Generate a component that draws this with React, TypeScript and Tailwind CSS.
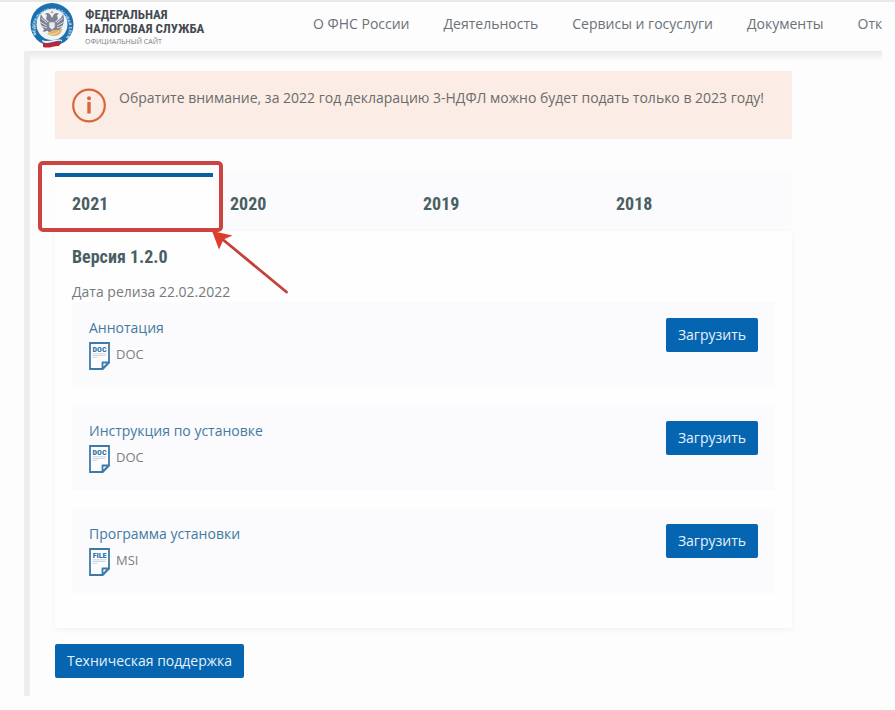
import { useState } from 'react';

const NAV_ITEMS = ['О ФНС России', 'Деятельность', 'Сервисы и госуслуги', 'Документы', 'Отк'];

const YEARS = ['2021', '2020', '2019', '2018'];

const FILES = [
  { title: 'Аннотация', badge: 'DOC', type: 'DOC' },
  { title: 'Инструкция по установке', badge: 'DOC', type: 'DOC' },
  { title: 'Программа установки', badge: 'FILE', type: 'MSI' },
];

function Emblem() {
  return (
    <svg className="h-[46px] w-11 shrink-0 overflow-visible" viewBox="0 0 44 46" aria-hidden="true">
      <defs>
        <path id="ring" d="M8 35.500A17 17 0 1 1 36 35.500" />
      </defs>
      <circle cx="22" cy="22.500" r="21.500" fill="#1d6fae" />
      <circle cx="22" cy="22.500" r="15.500" fill="#f1f4f7" />
      <text fontSize="4" fontWeight="700" fill="#dcebf5" fontFamily="'Liberation Sans', sans-serif">
        <textPath href="#ring" startOffset="3">
          ФЕДЕРАЛЬНАЯ НАЛОГОВАЯ СЛУЖБА
        </textPath>
      </text>
      {/* double-headed eagle */}
      <g fill="#7d8194">
        <path d="M21 14c-1-3-4-4-6-2l2 1-1 4 3 3h6l3-3-1-4 2-1c-2-2-5-1-6 2l-1 2z" />
        <path d="M17 19c-2-1-5-4-6-7-2 5-1 12 3 15l-1 3 4-1 2-4z" />
        <path d="M27 19c2-1 5-4 6-7 2 5 1 12-3 15l1 3-4-1-2-4z" />
        <path d="M17 20h10l1 7-6 7-6-7z" />
      </g>
      <path d="M11 16l6 5M10 20l7 4M11 24l6 2M33 16l-6 5M34 20l-7 4M33 24l-6 2" stroke="#dfe2e8" strokeWidth=".9" />
      <path d="M19 20h6v5l-3 3-3-3z" fill="#e8eaf0" stroke="#8d93a8" strokeWidth=".7" />
      <path d="M20.500 10.500l1.500-2 1.500 2-1.500 1z" fill="#c9a45c" />
      <path d="M17 32c2-1 4-4 7-4 4 0 7 0 8-2 0 5-3 8-8 8-4 0-5-1-7-2z" fill="#dfb56c" />
      <path d="M19 32c3 1 7 0 10-3" stroke="#f3dfb8" strokeWidth=".9" fill="none" />
      {/* tricolour ribbon */}
      <path d="M12 38c6 3 14-2 20 0l-1 3c-5-1-12 3-18 0z" fill="#f7f7f9" />
      <path d="M12.500 40c6 3 13-2 19-1l-.5 2c-6-1-12 3-18 1z" fill="#3a66a4" />
      <path d="M13 41c6 2 12-2 18-1l-2 4c-5-.5-10 3-16 1z" fill="#bf2536" />
    </svg>
  );
}

function FileIcon({ label }: { label: string }) {
  return (
    <svg className="h-7 w-[21px] shrink-0" viewBox="0 0 21 28" fill="none" aria-hidden="true">
      <path d="M1 1h19v19.500L13.500 27H1z" fill="#fdfdff" stroke="#3c7aa8" strokeWidth="1.800" />
      <path d="M13.500 27v-6.500H20z" stroke="#3c7aa8" strokeWidth="1.800" strokeLinejoin="round" />
      <text
        x="10.500"
        y="9.800"
        textAnchor="middle"
        fontSize="8"
        fontWeight="800"
        fill="#2f74a8"
        fontFamily="'Roboto Condensed', Roboto, sans-serif"
      >
        {label}
      </text>
      <path d="M3.500 11.800h14M3.500 13.500h13M3.500 15.300h5" stroke="#b9c6d0" strokeWidth=".7" />
    </svg>
  );
}

function Header() {
  return (
    <header className="flex h-[49px] items-start pl-[6px]">
      <a href="#" className="flex w-[283px] shrink-0 items-start gap-[11px]">
        <Emblem />
        <span className="flex flex-col pt-[6px] text-[#454a50]">
          <span className="font-['Roboto_Condensed','Liberation_Sans_Narrow',Roboto,sans-serif] text-[13px] leading-[14px] font-bold whitespace-nowrap">
            ФЕДЕРАЛЬНАЯ
            <br />
            НАЛОГОВАЯ СЛУЖБА
          </span>
          <span className="text-[7px] leading-3 whitespace-nowrap text-[#777b80]">ОФИЦИАЛЬНЫЙ САЙТ</span>
        </span>
      </a>
      <nav className="flex gap-[34px] pt-3 text-[14px] leading-5 whitespace-nowrap text-[#6b7177]">
        {NAV_ITEMS.map((item) => (
          <a key={item} href="#">
            {item}
          </a>
        ))}
      </nav>
    </header>
  );
}

function Notice() {
  return (
    <div className="flex h-[68px] items-start gap-3 bg-[#fbede5] px-[17px] pt-[17px]" role="note">
      <svg className="h-[35px] w-[35px] shrink-0" viewBox="0 0 35 35" fill="none" aria-hidden="true">
        <circle cx="17" cy="17.500" r="15.800" stroke="#d9663a" strokeWidth="2.200" />
        <path d="M17 14v11.500" stroke="#d9663a" strokeWidth="3.400" />
        <circle cx="17" cy="10.300" r="2" fill="#d9663a" />
      </svg>
      <p className="text-[14px] leading-5 whitespace-nowrap text-[#6b6b6b]">
        Обратите внимание, за 2022 год декларацию 3-НДФЛ можно будет подать только в 2023 году!
      </p>
    </div>
  );
}

export default function App() {
  const [year, setYear] = useState('2021');

  return (
    <div className="min-h-screen overflow-hidden border-t-2 border-[#e9e9ea] bg-[#fdfdfd] pr-[13px] pl-6 font-['Open_Sans','Noto_Sans',sans-serif]">
      <Header />

      <main className="border-l-[6px] border-[#eeeef0] pb-[18px]">
        <div className="h-[10px] bg-linear-to-b from-[#e8e8eb] to-[#fdfdfd]" />

        <div className="max-w-[762px] pt-[10px] pl-[25px]">
          <Notice />

          <section className="relative mt-[34px]">
            <div role="tablist" className="grid grid-cols-[158fr_193fr_193fr_193fr] bg-[#fbfbfd]">
              {YEARS.map((item) => (
                <button
                  key={item}
                  type="button"
                  role="tab"
                  aria-selected={item === year}
                  onClick={() => setYear(item)}
                  className={`h-[58px] border-t-4 px-[17px] text-left font-['Roboto_Condensed','Liberation_Sans_Narrow',Roboto,sans-serif] text-[18px] leading-6 font-bold text-[#4a5f63] ${
                    item === year ? 'border-[#0a5f9f] bg-[#fefefe]' : 'border-transparent'
                  }`}
                >
                  {item}
                </button>
              ))}
            </div>

            <div role="tabpanel" className="bg-[#fefefe] px-[17px] pt-[14px] pb-[35px] shadow-[0_2px_5px_#f3f3f7]">
              <h2 className="font-['Roboto_Condensed','Liberation_Sans_Narrow',Roboto,sans-serif] text-[18px] leading-6 font-bold text-[#4a5f63]">
                Версия 1.2.0
              </h2>
              <p className="mt-[13px] text-[14px] leading-5 text-[#76797c]">Дата релиза 22.02.2022</p>

              <ul className="flex flex-col gap-[18px]">
                {FILES.map((file) => (
                  <li key={file.title} className="flex h-[85px] items-start justify-between bg-[#fbfbfd] px-[17px] pt-4">
                    <div>
                      <a href="#" className="block text-[14px] leading-5 text-[#427aa1]">
                        {file.title}
                      </a>
                      <div className="mt-1 flex items-start gap-[6px]">
                        <FileIcon label={file.badge} />
                        <span className="text-[13px] leading-6 text-[#7d8082]">{file.type}</span>
                      </div>
                    </div>
                    <button type="button" className="h-[34px] rounded-xs bg-[#0565b1] px-3 text-[14px] leading-5 text-[#e6f1fa]">
                      Загрузить
                    </button>
                  </li>
                ))}
              </ul>
            </div>

            {/* callout around the active tab */}
            <div className="pointer-events-none absolute -top-3 -left-[17px] h-[71px] w-[185px] rounded-[5px] border-4 border-[#cb4440]" />
            <svg className="pointer-events-none absolute top-[57px] left-[156px] h-16 w-20" viewBox="0 0 80 64" aria-hidden="true">
              <path d="M10 8L75.500 62" stroke="#c5403c" strokeWidth="2.800" strokeLinecap="round" />
              <path d="M1 1l20.500 4.500-9 4-4.500 10z" fill="#df3c2d" />
            </svg>
          </section>

          <button type="button" className="mt-4 h-[34px] rounded-xs bg-[#0565b1] px-3 text-[14px] leading-5 text-[#e6f1fa]">
            Техническая поддержка
          </button>
        </div>
      </main>
    </div>
  );
}
